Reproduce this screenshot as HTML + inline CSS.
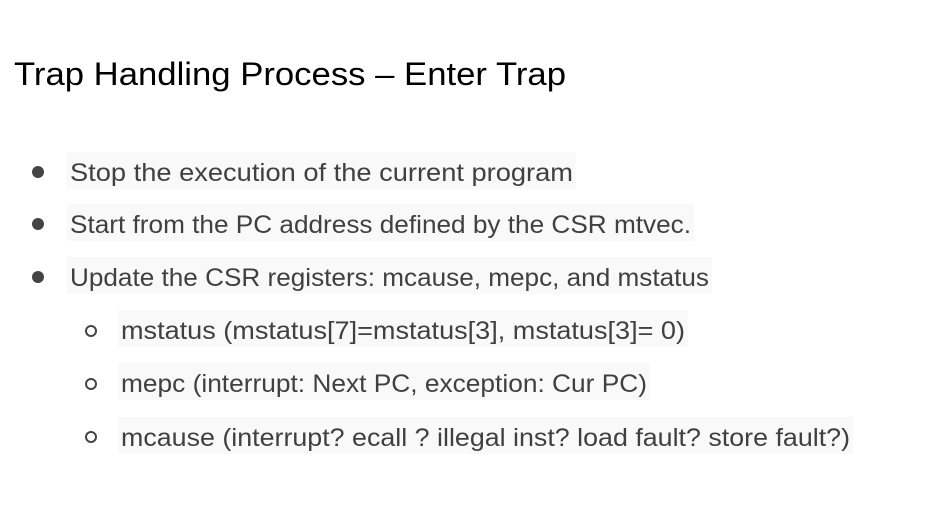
<!DOCTYPE html>
<html><head><meta charset="utf-8"><style>html,body{margin:0;padding:0;background:#fff;}svg{display:block}</style></head>
<body>
<svg width="940" height="529" xmlns="http://www.w3.org/2000/svg" font-family="'Liberation Sans', sans-serif">
<g fill="#f9f9f9">
<rect x="67" y="152" width="509" height="37"/>
<rect x="67" y="204" width="627" height="37"/>
<rect x="67" y="257" width="645" height="37"/>
<rect x="118" y="310" width="570" height="37"/>
<rect x="118" y="363" width="532" height="37"/>
<rect x="118" y="417" width="735" height="37"/>
</g>
<text x="14" y="85" font-size="32" fill="#000" textLength="552" lengthAdjust="spacingAndGlyphs">Trap Handling Process – Enter Trap</text>
<g fill="#444">
<circle cx="38" cy="172" r="6"/><circle cx="38" cy="224" r="6"/><circle cx="38" cy="277" r="6"/>
</g>
<g fill="none" stroke="#444" stroke-width="2">
<circle cx="91" cy="331" r="5"/><circle cx="91" cy="384" r="5"/><circle cx="91" cy="437" r="5"/>
</g>
<g font-size="25" fill="#404040">
<text x="70" y="181" textLength="503" lengthAdjust="spacingAndGlyphs">Stop the execution of the current program</text>
<text x="70" y="233" textLength="621" lengthAdjust="spacingAndGlyphs">Start from the PC address defined by the CSR mtvec.</text>
<text x="70" y="286" textLength="639" lengthAdjust="spacingAndGlyphs">Update the CSR registers: mcause, mepc, and mstatus</text>
<text x="121" y="339" textLength="564" lengthAdjust="spacingAndGlyphs">mstatus (mstatus[7]=mstatus[3], mstatus[3]= 0)</text>
<text x="121" y="392" textLength="526" lengthAdjust="spacingAndGlyphs">mepc (interrupt: Next PC, exception: Cur PC)</text>
<text x="121" y="446" textLength="729" lengthAdjust="spacingAndGlyphs">mcause (interrupt? ecall ? illegal inst? load fault? store fault?)</text>
</g>
</svg>
</body></html>
